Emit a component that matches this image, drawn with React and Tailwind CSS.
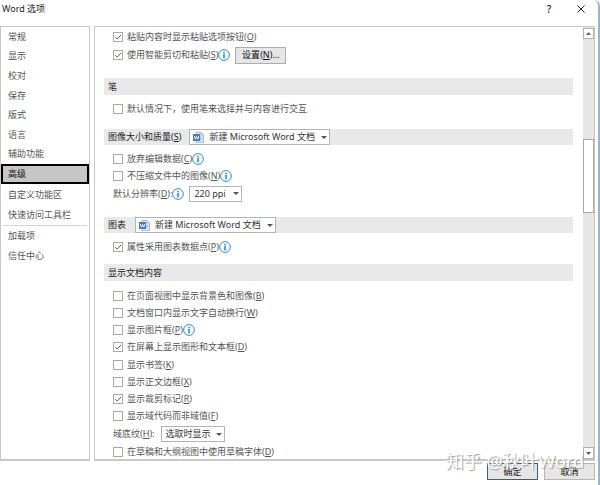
import { useState } from "react";

function Key({ k }) {
  return (
    <>
      (<span className="underline underline-offset-1">{k}</span>)
    </>
  );
}

function Info() {
  return (
    <svg className="size-3 shrink-0" viewBox="0 0 12 12" aria-hidden="true">
      <circle cx="6" cy="6" r="5.4" fill="#f4fafd" stroke="#3b8fc4" strokeWidth="1" />
      <rect x="5.3" y="2.8" width="1.4" height="1.5" fill="#1f7ab8" />
      <rect x="5.3" y="5" width="1.4" height="4.3" fill="#1f7ab8" />
    </svg>
  );
}

function Check({ label, k, on = false, info = false, children }) {
  const [checked, setChecked] = useState(on);
  return (
    <div className="flex min-h-0 flex-1 items-center">
      <label className="flex items-center gap-1 whitespace-nowrap">
        <span className="grid size-[10px] shrink-0">
          <input
            type="checkbox"
            checked={checked}
            onChange={() => setChecked(!checked)}
            className="col-start-1 row-start-1 size-[10px] appearance-none border border-[#a9a9a9] bg-white"
          />
          {checked && (
            <svg className="pointer-events-none col-start-1 row-start-1 size-[10px]" viewBox="0 0 10 10" aria-hidden="true">
              <path d="M2.2 5.1 4.2 7 8 3" fill="none" stroke="#555" strokeWidth="1" />
            </svg>
          )}
        </span>
        <span>
          {label}
          {k && <Key k={k} />}
        </span>
      </label>
      {info && <Info />}
      {children}
    </div>
  );
}

function WordIcon() {
  return (
    <svg className="pointer-events-none col-start-1 row-start-1 ml-1 h-[11px] w-[11px] self-center" viewBox="0 0 11 11" aria-hidden="true">
      <path d="M3 .5h5l2.5 2.5v7.5H3z" fill="#eef4fb" stroke="#8eaace" strokeWidth=".8" />
      <path d="M8 .6v2.4h2.4" fill="none" stroke="#8eaace" strokeWidth=".7" />
      <path d="M7.5 5h2M7.5 6.5h2M7.5 8h2" stroke="#8eaace" strokeWidth=".7" />
      <rect x="0" y="2" width="7.2" height="7" fill="#4478b8" />
      <path d="M1.3 3.9 2.4 7.2 3.6 4.4 4.8 7.2 5.9 3.9" fill="none" stroke="#fff" strokeWidth=".9" />
    </svg>
  );
}

function Select({ label, options, className, icon = false }) {
  return (
    <span className="grid items-center">
      <select
        aria-label={label}
        className={`col-start-1 row-start-1 h-4 appearance-none border border-[#b4b4b4] bg-white text-[#333] ${icon ? "pl-[19px]" : "pl-1"} ${className}`}
      >
        {options.map((o) => (
          <option key={o}>{o}</option>
        ))}
      </select>
      {icon && <WordIcon />}
      <svg className="pointer-events-none col-start-1 row-start-1 mr-[3px] h-[3px] w-[6px] justify-self-end" viewBox="0 0 6 3" aria-hidden="true">
        <path d="M0 0h6L3 3z" fill="#555" />
      </svg>
    </span>
  );
}

function Bar({ children, className = "h-[17px]" }) {
  return (
    <h2 className={`flex shrink-0 items-center bg-[#e9e9e9] pl-1 text-[#222] ${className}`}>{children}</h2>
  );
}

function NavItem({ children, active = false }) {
  return (
    <button
      type="button"
      className={
        active
          ? "flex h-5 w-full shrink-0 items-center border-2 border-black bg-[#c6c6c6] pl-[5px] text-[#111]"
          : "flex min-h-0 flex-1 items-center pl-[7px] text-left"
      }
    >
      {children}
    </button>
  );
}

const docs = ["新建 Microsoft Word 文档"];

export default function App() {
  return (
    <div className="relative flex h-screen min-h-[485px] flex-col overflow-hidden rounded-tr-md border-r-2 border-[#9fb2cc] bg-white font-['Noto_Sans','Noto_Sans_CJK_SC',sans-serif] text-[9px] leading-3 text-[#555]">
      <header className="flex h-[26px] shrink-0 items-center justify-between pr-[13px] pb-2 pl-[2px]">
        <h1 className="text-[#222]">Word 选项</h1>
        <div className="flex items-center gap-[23px] text-[#222]">
          <button type="button" aria-label="帮助" className="w-[10px] text-[10px] font-medium">
            ?
          </button>
          <button type="button" aria-label="关闭">
            <svg className="size-2" viewBox="0 0 8 8" aria-hidden="true">
              <path d="M.5.5l7 7M7.5.5l-7 7" stroke="#222" strokeWidth="1" />
            </svg>
          </button>
        </div>
      </header>

      <div className="flex min-h-0 flex-1 gap-1 pr-[3px]">
        <nav className="flex w-[90px] shrink-0 flex-col border border-b-2 border-[#c8c8c8]">
          <div className="flex h-[137px] flex-col">
            <NavItem>常规</NavItem>
            <NavItem>显示</NavItem>
            <NavItem>校对</NavItem>
            <NavItem>保存</NavItem>
            <NavItem>版式</NavItem>
            <NavItem>语言</NavItem>
            <NavItem>辅助功能</NavItem>
          </div>
          <NavItem active>高级</NavItem>
          <div className="mx-[2px] flex h-[42px] flex-col border-b border-[#d4d4d4] pt-px">
            <div className="-ml-[2px] flex flex-1 flex-col">
              <NavItem>自定义功能区</NavItem>
              <NavItem>快速访问工具栏</NavItem>
            </div>
          </div>
          <div className="flex h-10 flex-col">
            <NavItem>加载项</NavItem>
            <NavItem>信任中心</NavItem>
          </div>
        </nav>

        <main className="flex min-w-0 flex-1 border border-b-2 border-[#c8c8c8]">
          <div className="flex min-w-0 flex-1 flex-col overflow-hidden pr-[10px] pl-[9px]">
            <div className="flex h-[51px] shrink-0 flex-col pt-px pb-[14px] pl-[9px]">
              <Check label="粘贴内容时显示粘贴选项按钮" k="O" on />
              <Check label="使用智能剪切和粘贴" k="S" on info>
                <button
                  type="button"
                  className="ml-[5px] h-[17px] w-[51px] border border-[#adadad] bg-[#e6e6e6] text-[#111]"
                >
                  设置
                  <Key k="N" />
                  ...
                </button>
              </Check>
            </div>

            <Bar>笔</Bar>
            <div className="flex h-[34px] shrink-0 flex-col pt-[3px] pb-[9px] pl-[9px]">
              <Check label="默认情况下，使用笔来选择并与内容进行交互" />
            </div>

            <Bar className="h-4 gap-2">
              <span>
                图像大小和质量
                <Key k="S" />
              </span>
              <Select icon label="图像大小和质量" options={docs} className="w-[141px]" />
            </Bar>
            <div className="flex shrink-0 flex-col pt-[5px] pb-[14px] pl-[9px]">
              <div className="flex h-[34px] flex-col">
                <Check label="放弃编辑数据" k="C" info />
                <Check label="不压缩文件中的图像" k="N" info />
              </div>
              <div className="flex h-[19px] items-center">
                <span>
                  默认分辨率
                  <Key k="D" />:
                </span>
                <Info />
                <span className="ml-[5px]">
                  <Select label="默认分辨率" options={["220 ppi"]} className="w-[53px]" />
                </span>
              </div>
            </div>

            <Bar className="h-4 gap-[9px]">
              图表
              <Select icon label="图表" options={docs} className="w-[141px]" />
            </Bar>
            <div className="flex h-[31px] shrink-0 flex-col pt-[5px] pb-[9px] pl-[9px]">
              <Check label="属性采用图表数据点" k="P" on info />
            </div>

            <Bar>显示文档内容</Bar>
            <div className="flex shrink-0 flex-col pt-[6px] pl-[9px]">
              <div className="flex h-[138px] flex-col">
                <Check label="在页面视图中显示背景色和图像" k="B" />
                <Check label="文档窗口内显示文字自动换行" k="W" />
                <Check label="显示图片框" k="P" info />
                <Check label="在屏幕上显示图形和文本框" k="D" on />
                <Check label="显示书签" k="K" />
                <Check label="显示正文边框" k="X" />
                <Check label="显示裁剪标记" k="R" on />
                <Check label="显示域代码而非域值" k="F" />
              </div>
              <div className="flex h-[18px] items-center gap-[6px]">
                <span>
                  域底纹
                  <Key k="H" />:
                </span>
                <Select label="域底纹" options={["选取时显示"]} className="w-[64px]" />
              </div>
              <div className="flex h-[17px] flex-col">
                <Check label="在草稿和大纲视图中使用草稿字体" k="D" />
              </div>
            </div>
          </div>

          <div className="flex w-[11px] shrink-0 flex-col bg-[#e6e6e6] pt-px">
            <button type="button" aria-label="向上滚动" className="grid h-[11px] w-full place-items-center border border-[#b0b0b0] bg-white">
              <svg className="h-[3px] w-[5px]" viewBox="0 0 5 3" aria-hidden="true">
                <path d="M0 3h5L2.5 0z" fill="#666" />
              </svg>
            </button>
            <div className="flex-[100]" />
            <div className="h-[74px] border border-[#a9a9a9] bg-white" />
            <div className="flex-[234]" />
            <button type="button" aria-label="向下滚动" className="grid h-[12px] w-full place-items-center border border-[#b0b0b0] bg-white">
              <svg className="h-[3px] w-[5px]" viewBox="0 0 5 3" aria-hidden="true">
                <path d="M0 0h5L2.5 3z" fill="#555" />
              </svg>
            </button>
          </div>
        </main>
      </div>

      <footer className="flex h-6 shrink-0 items-start justify-end gap-[6px] pt-[2px] pr-[3px]">
        <button type="button" className="h-[17px] w-[51px] border border-[#2f5f9f] bg-[#e6e6e6] text-[#111]">
          确定
        </button>
        <button type="button" className="h-[17px] w-[51px] border border-[#b4b4b4] bg-[#e6e6e6] text-[#111]">
          取消
        </button>
      </footer>

      <div className="pointer-events-none absolute right-[14px] bottom-[12px] text-[18px] leading-6 whitespace-nowrap text-white [text-shadow:1px_1px_1px_#999]">
        知乎 @秋叶Word
      </div>
    </div>
  );
}
